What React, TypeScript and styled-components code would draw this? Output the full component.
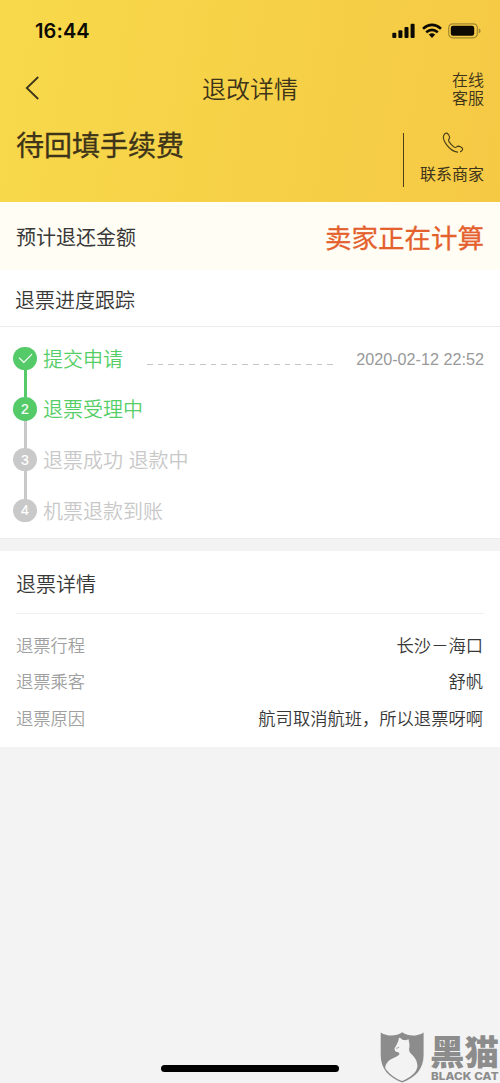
import React from "react";
import styled, { createGlobalStyle } from "styled-components";

const GlobalStyle = createGlobalStyle`
  * { box-sizing: border-box; }
  body {
    margin: 0;
    background: #f3f3f3;
    font-family: "Liberation Sans", "Noto Sans CJK SC", sans-serif;
    color: #383838;
  }
`;

const Screen = styled.main`
  position: relative;
  width: 500px;
  height: 1083px;
  overflow: hidden;
  background: #f3f3f3;
`;

const Header = styled.header`
  height: 202px;
  background: linear-gradient(100deg, #f8d94c 0%, #f6d147 50%, #f6c945 100%);
  color: #3d3419;
`;

const StatusBar = styled.div`
  display: flex;
  justify-content: space-between;
  align-items: center;
  height: 62px;
  padding: 0 19px 0 35px;
`;

const Clock = styled.span`
  font: 600 20px/24px Inter, sans-serif;
  letter-spacing: 0.1px;
  color: #0c0a02;
`;

const StatusIcons = styled.div`
  display: flex;
  align-items: center;
  gap: 6px;
  svg { display: block; }
`;

const NavBar = styled.nav`
  display: grid;
  grid-template-columns: 100px 1fr 100px;
  align-items: center;
  height: 52px;
  padding: 0 16px;
  svg { display: block; margin-left: 9px; }
`;

const NavTitle = styled.h1`
  margin: 0;
  padding-top: 3px;
  font-size: 24px;
  line-height: 36px;
  font-weight: 350;
  text-align: center;
`;

const ServiceLink = styled.a`
  justify-self: end;
  width: 32px;
  padding-top: 4px;
  font-size: 16px;
  font-weight: 350;
  line-height: 18.5px;
`;

const Hero = styled.div`
  display: flex;
  justify-content: space-between;
  padding: 11px 16px 0;
`;

const HeroTitle = styled.h2`
  margin: 0;
  padding-top: 2px;
  font-size: 28px;
  line-height: 40px;
  font-weight: 400;
  -webkit-text-stroke: 0.3px currentColor;
`;

const Contact = styled.div`
  display: flex;
  flex-direction: column;
  align-items: center;
  height: 54px;
  margin-top: 8px;
  padding-left: 16px;
  border-left: 1px solid #4b3f1a;
  font-size: 16px;
  line-height: 24px;
  svg { display: block; margin: -1px 0 10px 3px; }
`;

const AmountBar = styled.section`
  display: flex;
  justify-content: space-between;
  align-items: center;
  height: 68px;
  padding: 0 16px;
  background: #fffdf4;
  font-size: 20px;
`;

const Amount = styled.strong`
  font-size: 26.5px;
  font-weight: 400;
  -webkit-text-stroke: 0.3px currentColor;
  color: #e4602c;
`;

const Card = styled.section`
  background: #fff;
`;

const ProgressCard = styled(Card)`
  height: 269px;
  margin-bottom: 12px;
  border-bottom: 1px solid #ebebeb;
`;

const ProgressTitle = styled.h3`
  height: 57px;
  margin: 0;
  padding-left: 15px;
  border-bottom: 1px solid #ebebeb;
  font-size: 20px;
  line-height: 62px;
  font-weight: 350;
`;

const Steps = styled.ol`
  margin: 0;
  padding: 19.5px 16px 0 13px;
  list-style: none;
`;

const Step = styled.li<{ $done: boolean }>`
  display: flex;
  align-items: flex-start;
  height: 50.7px;
  font-size: 20px;
  line-height: 26px;
  font-weight: 350;
  color: ${(p) => (p.$done ? "#55ce68" : "#c8c8c8")};
`;

const Track = styled.div`
  display: flex;
  flex-direction: column;
  align-items: center;
  width: 24px;
  height: 100%;
  margin-right: 6px;
`;

const Marker = styled.span<{ $done: boolean }>`
  display: flex;
  align-items: center;
  justify-content: center;
  flex: none;
  width: 23.5px;
  height: 23.5px;
  border-radius: 50%;
  background: ${(p) => (p.$done ? "#55ca69" : "#c9c9c9")};
  color: #fff;
  font: 400 14px/24px "Liberation Sans", sans-serif;
  -webkit-text-stroke: 0.2px #fff;
`;

const Connector = styled.i<{ $done: boolean }>`
  flex: 1;
  width: 3px;
  background: ${(p) => (p.$done ? "#55ca69" : "#c9c9c9")};
`;

const Dashes = styled.span`
  width: 186px;
  height: 1px;
  margin: 17px 0 0 24px;
  background: repeating-linear-gradient(90deg, #c6c6c6 0 5.5px, transparent 5.5px 10.6px);
`;

const Stamp = styled.time`
  margin-left: auto;
  font-size: 16.2px;
  line-height: 24px;
  font-weight: 400;
  color: #999;
`;

const DetailCard = styled(Card)`
  height: 196px;
  padding: 0 16px;
`;

const DetailTitle = styled.h3`
  height: 63px;
  margin: 0 0 13.5px;
  border-bottom: 1px solid #efefef;
  font-size: 20px;
  line-height: 69px;
  font-weight: 350;
`;

const DetailRow = styled.div`
  display: flex;
  justify-content: space-between;
  height: 36.7px;
  padding-right: 1px;
  font-size: 17.3px;
  font-weight: 350;
  line-height: 37.5px;
`;

const Label = styled.span`
  color: #a0a0a0;
`;

const HomeIndicator = styled.div`
  position: absolute;
  left: 161px;
  bottom: 11px;
  width: 178px;
  height: 7px;
  border-radius: 4px;
  background: #000;
`;

const Watermark = styled.div`
  position: absolute;
  left: 380px;
  top: 1031px;
  display: flex;
  gap: 7px;
  width: 120px;
  color: #8c8c8c;
  svg { flex: none; display: block; }
`;

const Brand = styled.div`
  display: flex;
  flex-direction: column;
  white-space: nowrap;
`;

const BrandName = styled.span`
  margin-left: -1px;
  font: 900 34.5px/39px "Noto Sans CJK SC", sans-serif;
`;

const BrandLatin = styled.span`
  align-self: flex-start;
  font: 800 10.4px/13px Inter, sans-serif;
  letter-spacing: 0.1px;
  transform: scaleX(1.12);
  transform-origin: left;
`;

const steps = [
  { label: "提交申请", done: true, time: "2020-02-12 22:52" },
  { label: "退票受理中", done: true },
  { label: "退票成功 退款中", done: false },
  { label: "机票退款到账", done: false },
];

const details = [
  ["退票行程", "长沙－海口"],
  ["退票乘客", "舒帆"],
  ["退票原因", "航司取消航班，所以退票呀啊"],
];

const SignalIcon = () => (
  <svg width="24" height="16" viewBox="0 0 24 16" fill="#0c0a02">
    <rect x="0.3" y="9.8" width="4" height="5.2" rx="1" />
    <rect x="6.4" y="7.2" width="4" height="7.8" rx="1" />
    <rect x="12.5" y="4" width="4" height="11" rx="1" />
    <rect x="18.6" y="0.8" width="4" height="14.2" rx="1" />
  </svg>
);

const WifiIcon = () => (
  <svg width="20" height="16" viewBox="0 0 20 16" fill="none" stroke="#0c0a02" strokeWidth="2.6">
    <path d="M1 5.7Q10-2 19 5.7" />
    <path d="M4.2 9.3Q10 4.3 15.8 9.3" />
    <path d="M6.8 11.5Q10 8.8 13.2 11.5L10 15Z" fill="#0c0a02" stroke="none" />
  </svg>
);

const BatteryIcon = () => (
  <svg width="33" height="16" viewBox="0 0 33 16">
    <rect x="0.7" y="0.8" width="28.6" height="14" rx="4" fill="none" stroke="#a18a30" strokeWidth="1.2" />
    <rect x="2.8" y="2.8" width="23.4" height="10" rx="2.2" fill="#0c0a02" />
    <path d="M30.7 5.3q2 1 2 2.6t-2 2.6z" fill="#a18a30" />
  </svg>
);

const PhoneIcon = () => (
  <svg width="22" height="22" viewBox="0 0 23 23" fill="none" stroke="#4b3f1a" strokeWidth="1.25" strokeLinejoin="round" strokeLinecap="round">
    <path d="M16.5 22C12 21.6 7.3 17.8 4.4 13.8C2 10.4 .3 6.6 1.3 3.9C1.9 2.2 3.4 1 4.6 1.2C6 1.5 7.6 4.2 7.8 5.7C8 7.2 6.4 7.8 6.6 9.2C7 11.4 11.4 16.2 13.8 16.9C15.2 17.3 15.7 15.5 17.2 15.4C18.8 15.4 21.7 17 22 18.2C22.2 19.4 21 20.9 19.8 21.5" />
  </svg>
);

const ShieldCat = () => (
  <svg width="44" height="52" viewBox="0 0 44 52">
    <path fill="#8c8c8c" d="M.7 1.4C8 5.8 16 5.4 22.2 1.2C28.5 5.4 36.5 5.8 43.6 1.4V24C43.6 38 35.5 46.5 22.2 51.6C9 46.5 .7 38 .7 24Z" />
    <path fill="#f3f3f3" d="M19 6.4C20.6 7 21.8 7.9 22.8 9C24 8.9 24.8 9 25.6 9.2L28.6 8.2C29 11.5 30 13.8 29.2 17C28.7 19.4 29.4 21 31 22.8C34.6 26 37.3 29.8 37.4 34.8C37.4 39.5 33.6 43.4 29.6 46.1C27.1 47.7 24.6 49 22.2 50C15 47.2 9 43 5.2 37.2C5.4 32.4 8.7 29.4 12.4 27.6C16 25.9 19.2 24.6 19.4 22.8C19.4 21.8 18.5 21.6 17.2 21.1C15.6 20.5 14.4 19.4 14.5 17.9C14.6 16.6 16 15.3 16.6 13.8C17.4 11.8 18.6 10 19 6.4Z" />
    <path d="M16.2 17.2q2 .2 3-1.3" fill="none" stroke="#8c8c8c" strokeWidth="0.8" />
  </svg>
);

export default function App() {
  return (
    <Screen>
      <GlobalStyle />
      <Header>
        <StatusBar>
          <Clock>16:44</Clock>
          <StatusIcons>
            <SignalIcon />
            <WifiIcon />
            <BatteryIcon />
          </StatusIcons>
        </StatusBar>
        <NavBar>
          <svg width="15" height="24" viewBox="0 0 15 24" fill="none" stroke="#3d3419" strokeWidth="1.8">
            <path d="M13.2 1L1.8 12L13.2 23" />
          </svg>
          <NavTitle>退改详情</NavTitle>
          <ServiceLink>在线客服</ServiceLink>
        </NavBar>
        <Hero>
          <HeroTitle>待回填手续费</HeroTitle>
          <Contact>
            <PhoneIcon />
            联系商家
          </Contact>
        </Hero>
      </Header>

      <AmountBar>
        预计退还金额
        <Amount>卖家正在计算</Amount>
      </AmountBar>

      <ProgressCard>
        <ProgressTitle>退票进度跟踪</ProgressTitle>
        <Steps>
          {steps.map((step, i) => (
            <Step key={step.label} $done={step.done}>
              <Track>
                <Marker $done={step.done}>
                  {i === 0 ? (
                    <svg width="15" height="11" viewBox="0 0 15 11" fill="none" stroke="#fff" strokeWidth="1.2">
                      <path d="M1 4.7L5.8 9.5L14 1.2" />
                    </svg>
                  ) : (
                    i + 1
                  )}
                </Marker>
                {i < steps.length - 1 && <Connector $done={i === 0} />}
              </Track>
              {step.label}
              {step.time && (
                <>
                  <Dashes />
                  <Stamp>{step.time}</Stamp>
                </>
              )}
            </Step>
          ))}
        </Steps>
      </ProgressCard>

      <DetailCard>
        <DetailTitle>退票详情</DetailTitle>
        {details.map(([label, value]) => (
          <DetailRow key={label}>
            <Label>{label}</Label>
            <span>{value}</span>
          </DetailRow>
        ))}
      </DetailCard>

      <HomeIndicator />
      <Watermark>
        <ShieldCat />
        <Brand>
          <BrandName>黑猫</BrandName>
          <BrandLatin>BLACK CAT</BrandLatin>
        </Brand>
      </Watermark>
    </Screen>
  );
}
